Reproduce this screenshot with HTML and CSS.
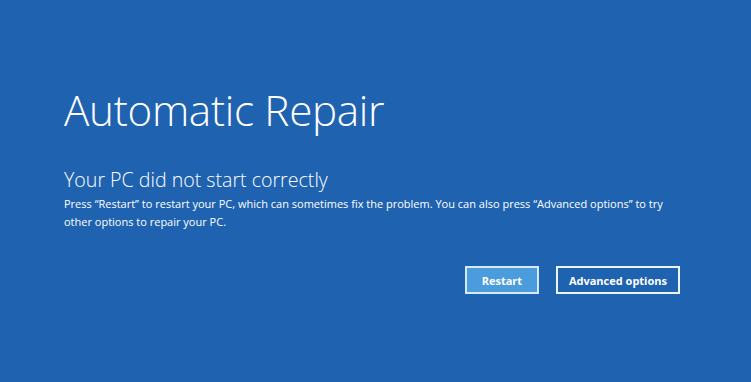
FILE: index.html
```html
<!DOCTYPE html>
<html lang="en">
<head>
<meta charset="utf-8">
<title>Automatic Repair</title>
<link rel="stylesheet" href="styles.css">
</head>
<body>
<main class="screen">
  <h1 class="title">Automatic Repair</h1>
  <h2 class="subtitle">Your PC did not start correctly</h2>
  <p class="desc">Press “Restart” to restart your PC, which can sometimes fix the problem. You can also press “Advanced options” to try other options to repair your PC.</p>
  <div class="actions">
    <button class="btn btn-primary">Restart</button>
    <button class="btn">Advanced options</button>
  </div>
</main>
</body>
</html>
```
FILE: styles.css
```css
html, body {
  margin: 0;
  padding: 0;
  width: 751px;
  height: 382px;
  overflow: hidden;
  background: #1f63b0;
}
.screen {
  padding: 80px 0 0 64px;
  color: #ffffff;
  font-family: "Open Sans", "Noto Sans", sans-serif;
}
.title {
  margin: 0;
  font-weight: 300;
  font-size: 42.2px;
  line-height: 60px;
  letter-spacing: -0.3px;
}
.subtitle {
  margin: 27px 0 0;
  font-weight: 300;
  font-size: 19.6px;
  line-height: 26px;
}
.desc {
  margin: 2px 0 0;
  width: 610px;
  font-size: 11px;
  line-height: 18px;
}
.actions {
  display: flex;
  justify-content: flex-end;
  gap: 17px;
  width: 616px;
  margin-top: 35px;
}
.btn {
  height: 28px;
  padding: 0 11px;
  border: 2px solid #eef4fb;
  background: #1f63b0;
  color: #ffffff;
  font-family: "Open Sans", "Noto Sans", sans-serif;
  font-weight: 700;
  font-size: 11px;
}
.btn-primary {
  width: 74px;
  background: #4b9cdc;
  border-color: #d6e9f8;
}
```
